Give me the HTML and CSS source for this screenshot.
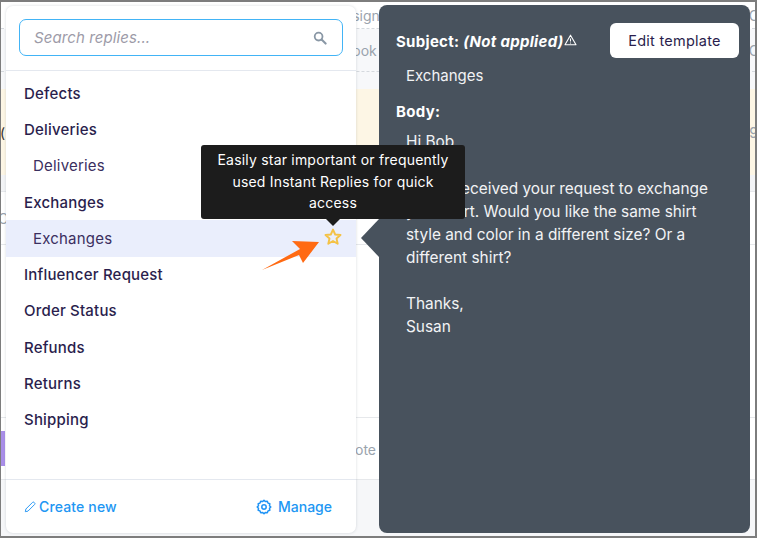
FILE: index.html
```html
<!DOCTYPE html>
<html lang="en">
<head>
<meta charset="utf-8">
<title>Instant Replies</title>
<link rel="stylesheet" href="styles.css">
</head>
<body>
<div class="frame">
  <div class="bg">
    <div class="bg-row r1"><span class="bg-mid">sign</span><span>C</span></div>
    <div class="bg-row r2"><span class="bg-mid">ook</span><span>C</span></div>
    <div class="bg-row r3"></div>
    <div class="bg-row r4"><span class="dark">(</span><span>9</span></div>
    <div class="bg-row r5"></div>
    <div class="bg-row r6"><span>C</span></div>
    <div class="bg-row r7"></div>
    <div class="bg-row r8"><span class="purple"></span><span class="bg-mid">ote</span></div>
    <div class="bg-row r9"></div>
  </div>

  <section class="replies">
    <div class="search-wrap">
      <div class="search">
        <span class="search-text">Search replies...</span>
        <svg class="search-icon" viewBox="0 0 14 14" width="14" height="14"><circle cx="5.6" cy="5.6" r="3.9" fill="none" stroke="#8997a5" stroke-width="1.8"/><path d="M8.6 8.6 12.6 12.6" stroke="#8997a5" stroke-width="2.1" stroke-linecap="round"/></svg>
      </div>
    </div>
    <ul class="list">
      <li class="item">Defects</li>
      <li class="item">Deliveries</li>
      <li class="item sub">Deliveries</li>
      <li class="item">Exchanges</li>
      <li class="item sub active">Exchanges
        <svg class="star" viewBox="0 0 20 20" width="20" height="20"><path d="M10 2.6 12.2 7.5 17.5 8 13.5 11.5 14.7 16.8 10 14 5.3 16.8 6.5 11.5 2.5 8 7.8 7.5Z" fill="none" stroke="#f4c246" stroke-width="1.9" stroke-linejoin="round"/></svg>
      </li>
      <li class="item">Influencer Request</li>
      <li class="item">Order Status</li>
      <li class="item">Refunds</li>
      <li class="item">Returns</li>
      <li class="item">Shipping</li>
    </ul>
    <div class="foot">
      <span class="link">
        <svg viewBox="0 0 12 12" width="12" height="12"><path d="M1.3 10.7 1.9 8 8.6 1.3Q9.3.7 10 1.3L10.7 2Q11.3 2.700 10.700 3.400L4 10.100Z" fill="none" stroke="#2f9bf5" stroke-width="1"/></svg>
        Create new
      </span>
      <span class="link manage">
        <svg viewBox="0 0 16 16" width="16" height="16"><path d="M8 1.2 9.300 2.600 11.300 2.300 12 4.100 13.800 4.800 13.500 6.800 14.800 8 13.500 9.200 13.800 11.200 12 11.900 11.300 13.700 9.300 13.400 8 14.800 6.700 13.400 4.700 13.700 4 11.900 2.200 11.200 2.500 9.200 1.200 8 2.500 6.800 2.200 4.800 4 4.100 4.700 2.300 6.700 2.600Z" fill="none" stroke="#1f93f5" stroke-width="1.500" stroke-linejoin="round"/><circle cx="8" cy="8" r="2.200" fill="none" stroke="#1f93f5" stroke-width="1.500"/></svg>
        Manage
      </span>
    </div>
  </section>

  <section class="preview">
    <div class="preview-head">
      <div class="subject">
        <strong>Subject:</strong> <strong class="na">(Not applied)</strong><svg class="warn" viewBox="0 0 13 12" width="13" height="12"><path d="M6.500 1.200 12 10.800H1Z" fill="none" stroke="#fff" stroke-width="1.100" stroke-linejoin="round"/><path d="M6.500 4.500V7.500M6.500 8.600V9.500" stroke="#fff" stroke-width="1"/></svg>
      </div>
      <button class="edit">Edit template</button>
    </div>
    <p class="subject-value">Exchanges</p>
    <h3 class="body-label">Body:</h3>
    <div class="body-text">
      <p>Hi Bob,</p>
      <p>We've received your request to exchange your shirt. Would you like the same shirt style and color in a different size? Or a different shirt?</p>
      <p>Thanks,<br>Susan</p>
    </div>
  </section>
  <span class="pointer"></span>

  <div class="tooltip">Easily star important or frequently used Instant Replies for quick access</div>

  <svg class="orange" viewBox="0 0 60 32" width="60" height="32"><polygon points="1,30 39,9 31,1 58,2 42,23 38,15" fill="#ff6a13"/></svg>
</div>
</body>
</html>
```

FILE: styles.css
```css
* { box-sizing: border-box; }
html, body { margin: 0; padding: 0; }
body { width: 757px; height: 538px; overflow: hidden; font-family: Inter, "Liberation Sans", sans-serif; color: #2a1e4d; }
.frame { position: relative; width: 757px; height: 538px; border: 1px solid #7d7d7d; border-width: 2px 2px 2px 1px; overflow: hidden; background: #fff; }

.bg { display: flex; flex-direction: column; height: 100%; font-size: 14px; color: #9aa3ad; }
.bg-row { display: flex; justify-content: space-between; align-items: center; flex: none; overflow: hidden; }
.bg-mid { margin-left: auto; margin-right: 372px; }
.r1 { height: 27px; border-bottom: 1px dashed #d5d9de; justify-content: flex-end; }
.r1 .bg-mid { margin-right: 369px; }
.r2 { height: 43px; background: #f7f8fa; border-bottom: 1px dashed #d5d9de; justify-content: flex-end; }
.r1 > span:last-child, .r2 > span:last-child { margin-right: -4px; }
.r3 { height: 17px; background: #f7f8fa; }
.r4 { height: 86px; background: #fdf6e5; }
.r4 > span:last-child { margin-right: -3px; }
.dark { color: #333; margin-left: -1px; }
.r5 { height: 17px; background: #f3f4f6; border-bottom: 1px solid #e6e8eb; }
.r6 { height: 53px; border-bottom: 1px solid #e6e8eb; }
.r6 span { margin-left: -3px; }
.r7 { height: 173px; border-bottom: 1px solid #e6e8eb; }
.r8 { height: 62px; border-bottom: 1px solid #e6e8eb; }
.r8 .bg-mid { margin-right: 379px; position: relative; top: 1px; }
.purple { width: 4px; height: 35px; background: #a98ee8; }
.r9 { flex: 1; background: #f6f7f9; }

.replies { position: absolute; left: 5px; top: 4px; width: 350px; height: 527px; background: #fff; border-radius: 7px; box-shadow: 0 0 3px rgba(40, 50, 70, .18); display: flex; flex-direction: column; }
.search-wrap { flex: none; height: 65px; padding: 13px 13px 0; border-bottom: 1px solid #e4e8ef; }
.search { height: 37px; border: 1px solid #42b4f6; border-radius: 7px; display: flex; align-items: center; justify-content: space-between; padding: 0 15px 0 14px; }
.search-text { font-size: 15px; font-style: italic; color: #9d9ba8; letter-spacing: .1px; }
.search-icon { flex: none; }
.list { list-style: none; margin: 0; padding: 4px 0 0; flex: 1; }
.item { position: relative; height: 36.3px; display: flex; align-items: center; padding-left: 18px; font-size: 15px; font-weight: 500; letter-spacing: .2px; color: #2a1e4d; }
.sub { padding-left: 27px; font-weight: 400; color: #3b2f5f; }
.active { height: 37px; margin-bottom: -.7px; background: #eaeefc; }
.star { position: absolute; left: 317px; top: 7px; }
.foot { flex: none; height: 54px; border-top: 1px solid #e4e8ef; display: flex; align-items: center; justify-content: space-between; padding: 0 24px 0 18px; }
.link { display: flex; align-items: center; gap: 3px; font-size: 14px; font-weight: 500; color: #2196f3; letter-spacing: .15px; }
.manage { gap: 6px; letter-spacing: 0; }

.preview { position: absolute; left: 378px; top: 3px; width: 371px; height: 528px; background: #48525d; border-radius: 8px; color: #f2f3f5; padding: 18px 11px 0 17px; font-size: 15px; }
.preview-head { display: flex; justify-content: space-between; align-items: flex-start; height: 35px; }
.subject { font-size: 15px; padding-top: 9px; color: #fff; display: flex; align-items: center; gap: 4px; letter-spacing: .3px; }
.na { font-style: italic; }
.warn { margin-left: -4px; margin-top: -4px; }
.edit { width: 129px; height: 35px; border: 0; border-radius: 6px; background: #fff; color: #2a1e4d; font: 400 14.5px Inter, "Liberation Sans", sans-serif; letter-spacing: .25px; }
.subject-value { margin: 6px 0 0 10px; line-height: 23px; }
.body-label { margin: 13px 0 0; font-size: 15px; font-weight: 700; line-height: 23px; color: #fff; letter-spacing: .3px; }
.body-text { margin: 7px 0 0 10px; font-size: 15.4px; line-height: 23px; width: 320px; }
.body-text p { margin: 0 0 23px; }
.body-text p:first-child { margin-bottom: 24px; }
.pointer { position: absolute; left: 360px; top: 217px; width: 0; height: 0; border-style: solid; border-width: 19px 18px 19px 0; border-color: transparent #48525d transparent transparent; }

.tooltip { position: absolute; left: 200px; top: 143px; width: 264px; height: 74px; background: #1c1c1c; border-radius: 3px; color: #fff; font-size: 14px; line-height: 21.5px; text-align: center; padding: 4px 12px 0; letter-spacing: .2px; }
.tooltip::after { content: ""; position: absolute; left: 125px; bottom: -7px; width: 0; height: 0; border-style: solid; border-width: 7px 7px 0; border-color: #1c1c1c transparent transparent; }
.orange { position: absolute; left: 260px; top: 238px; }
```
